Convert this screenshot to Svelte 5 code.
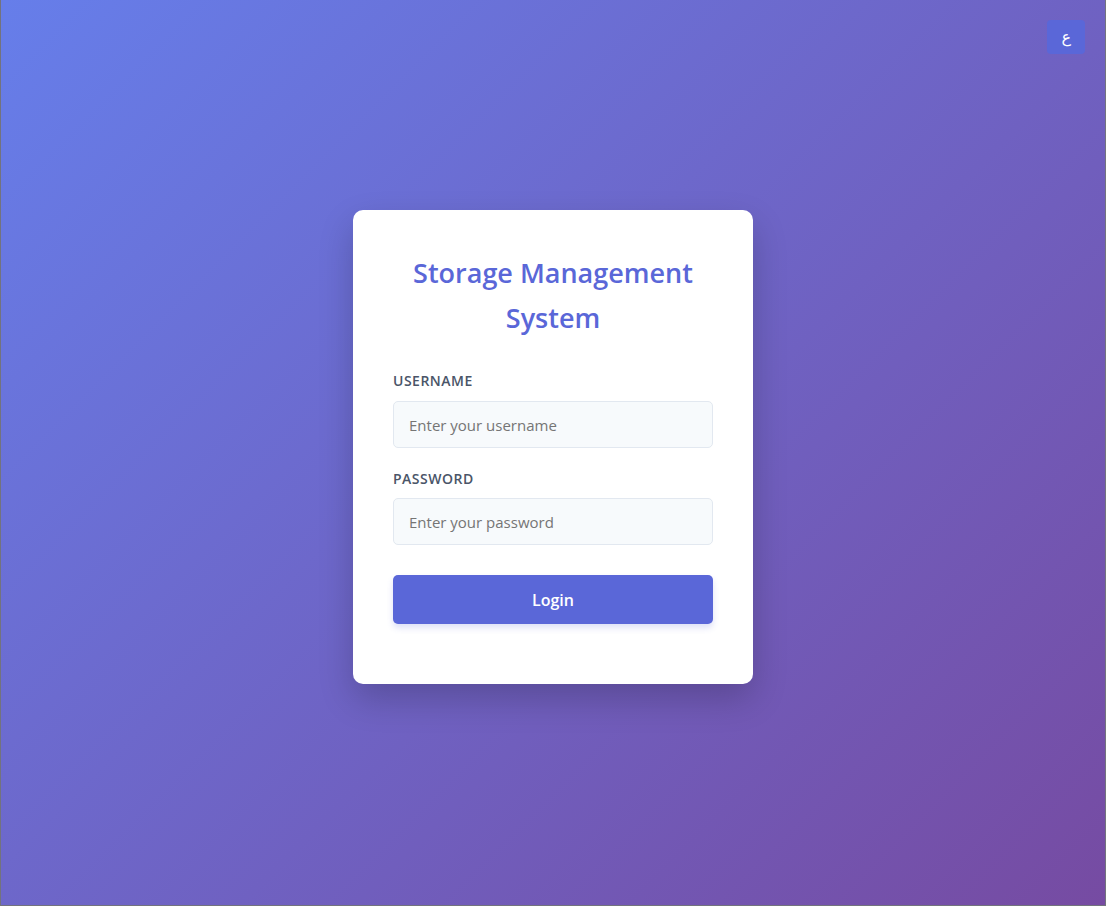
<script>
  let username = $state('');
  let password = $state('');
</script>

<div class="page">
  <button class="lang" type="button" lang="ar">ع</button>
  <main class="card">
    <h1>Storage Management System</h1>
    <form onsubmit={(e) => e.preventDefault()}>
      <label for="username">Username</label>
      <input id="username" type="text" placeholder="Enter your username" bind:value={username} />
      <label for="password">Password</label>
      <input id="password" type="password" placeholder="Enter your password" bind:value={password} />
      <button class="login" type="submit">Login</button>
    </form>
  </main>
</div>

<style>
  :global(body) {
    margin: 0;
  }

  .page {
    box-sizing: border-box;
    min-height: 100vh;
    display: flex;
    align-items: center;
    justify-content: center;
    padding: 0 20px 11px;
    position: relative;
    background: linear-gradient(135deg, #667eea 0%, #764ba2 100%);
    border: 1px solid #73737d;
    border-top: 0;
    font-family: 'Open Sans', 'Noto Sans', sans-serif;
    line-height: 1.6;
  }

  .lang {
    position: absolute;
    top: 20px;
    right: 20px;
    padding: 5px 14px;
    border: 0;
    border-radius: 4px;
    background: #5a67d8;
    color: #fff;
    font: 400 16px/24px 'DejaVu Sans', sans-serif;
  }

  .card {
    box-sizing: border-box;
    width: 100%;
    max-width: 400px;
    padding: 40px;
    border-radius: 10px;
    background: #fff;
    box-shadow: 0 15px 35px rgba(0, 0, 0, 0.2);
  }

  h1 {
    margin: 0 0 30px;
    color: #5a67d8;
    font-size: 27px;
    font-weight: 550;
    line-height: 45px;
    text-align: center;
  }

  form {
    display: flex;
    flex-direction: column;
    padding-bottom: 20px;
  }

  label {
    margin-bottom: 8px;
    color: #4a5568;
    font-size: 14px;
    font-weight: 550;
    letter-spacing: 0.5px;
    text-transform: uppercase;
  }

  input {
    box-sizing: border-box;
    width: 100%;
    height: 47px;
    margin: 0 0 20px;
    padding: 14px 15px 12px;
    border: 1px solid #e2e8f0;
    border-radius: 5px;
    background: #f7fafc;
    font: 400 15px 'Open Sans', sans-serif;
  }

  input::placeholder {
    color: #757575;
  }

  .login {
    margin-top: 10px;
    padding: 15px 14px 13px;
    border: 0;
    border-radius: 5px;
    background: #5a67d8;
    color: #fff;
    font: 600 16px/21px 'Open Sans', sans-serif;
    box-shadow: 0 4px 6px rgba(90, 103, 216, 0.2);
  }
</style>
